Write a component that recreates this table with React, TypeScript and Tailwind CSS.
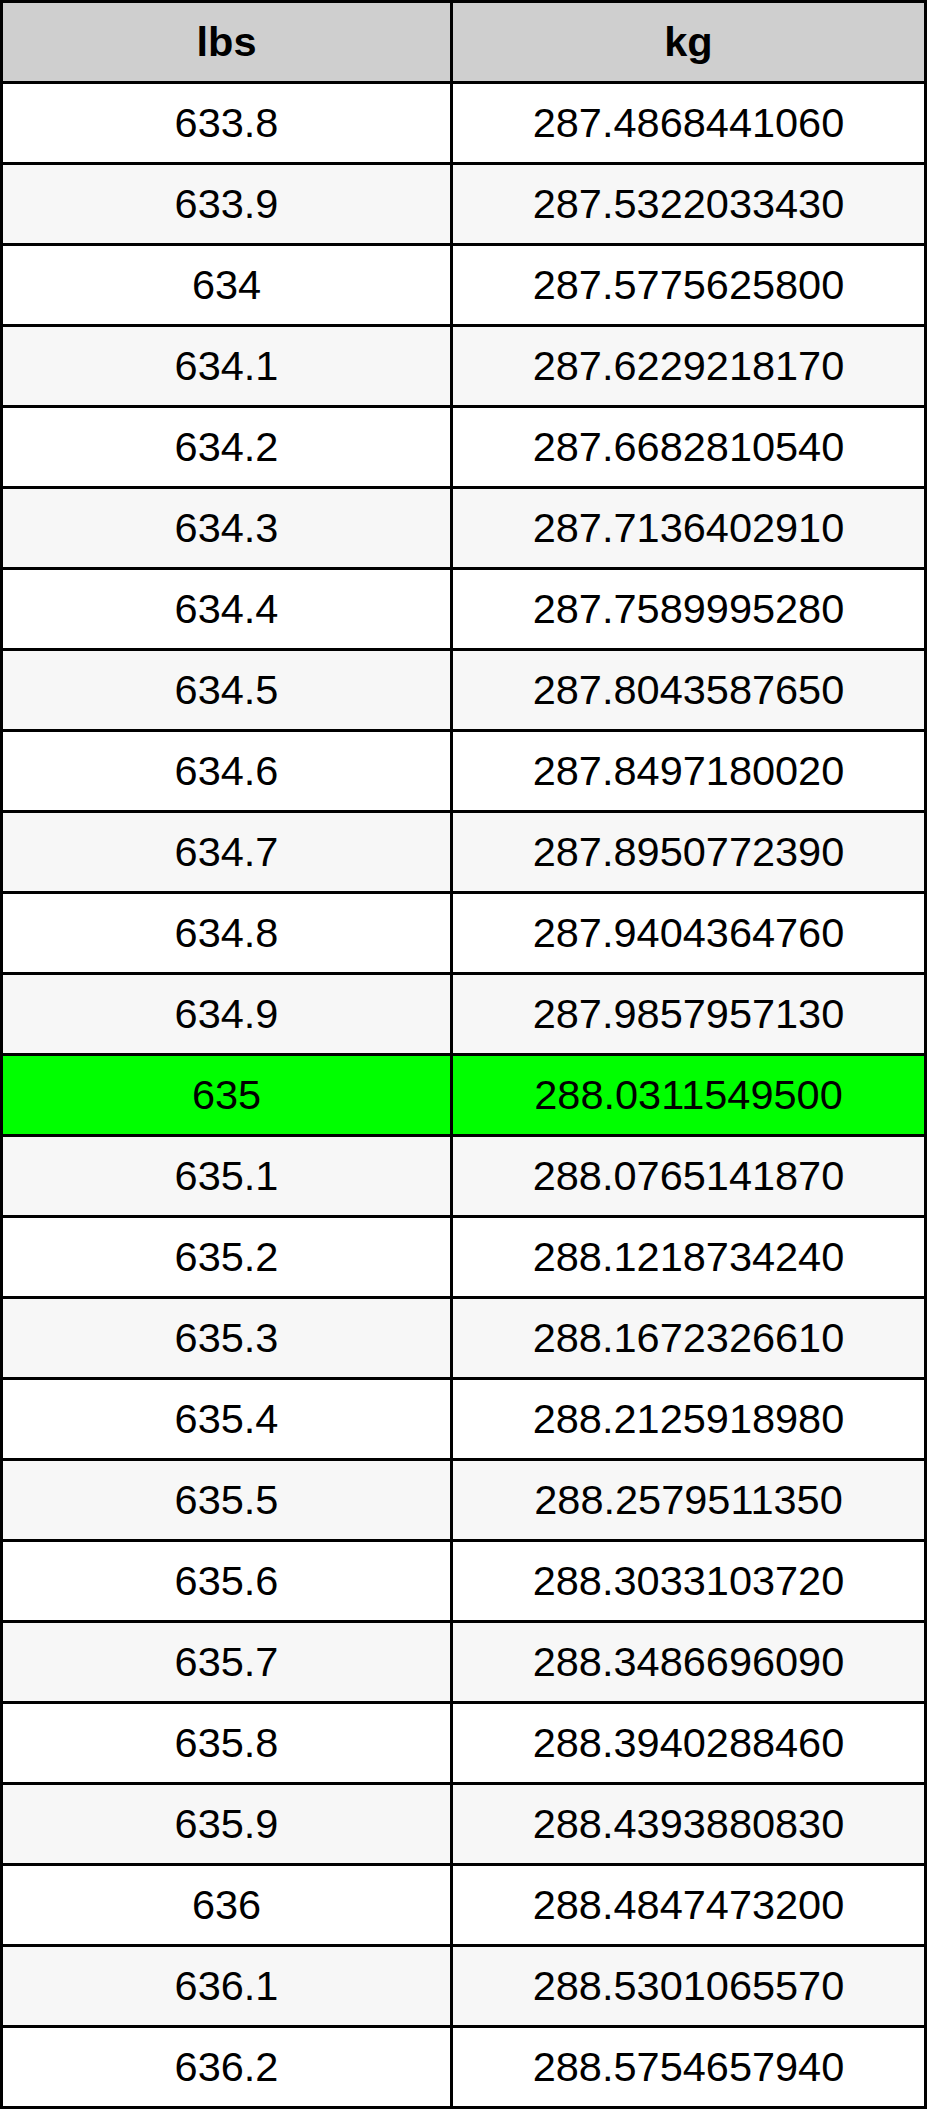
const rows: [string, string][] = [
  ["633.8", "287.4868441060"],
  ["633.9", "287.5322033430"],
  ["634", "287.5775625800"],
  ["634.1", "287.6229218170"],
  ["634.2", "287.6682810540"],
  ["634.3", "287.7136402910"],
  ["634.4", "287.7589995280"],
  ["634.5", "287.8043587650"],
  ["634.6", "287.8497180020"],
  ["634.7", "287.8950772390"],
  ["634.8", "287.9404364760"],
  ["634.9", "287.9857957130"],
  ["635", "288.0311549500"],
  ["635.1", "288.0765141870"],
  ["635.2", "288.1218734240"],
  ["635.3", "288.1672326610"],
  ["635.4", "288.2125918980"],
  ["635.5", "288.2579511350"],
  ["635.6", "288.3033103720"],
  ["635.7", "288.3486696090"],
  ["635.8", "288.3940288460"],
  ["635.9", "288.4393880830"],
  ["636", "288.4847473200"],
  ["636.1", "288.5301065570"],
  ["636.2", "288.5754657940"],
];

export default function App() {
  return (
    <div className="bg-white w-[930px] h-[2115px] font-['Liberation_Sans',Arial,sans-serif] text-black text-[41.5px] leading-none">
      <div className="w-[927px] border-[3px] border-black">
        {/* header */}
        <div className="flex h-[81px] bg-[#cfcfcf] border-b-[3px] border-black font-bold">
          <div className="w-[450px] border-r-[3px] border-black flex items-center justify-center">lbs</div>
          <div className="flex-1 flex items-center justify-center">kg</div>
        </div>

        {/* rows */}
        {rows.map(([lbs, kg], i) => {
          const bg = lbs === "635" ? "bg-[#00ff00]" : i % 2 === 0 ? "bg-white" : "bg-[#f7f7f7]";
          const last = i === rows.length - 1;
          return (
            <div
              key={lbs}
              className={`flex ${bg} ${last ? "h-[78px]" : "h-[81px] border-b-[3px] border-black"}`}
            >
              <div className="w-[450px] border-r-[3px] border-black flex items-center justify-center">{lbs}</div>
              <div className="flex-1 flex items-center justify-center">{kg}</div>
            </div>
          );
        })}
      </div>
    </div>
  );
}
